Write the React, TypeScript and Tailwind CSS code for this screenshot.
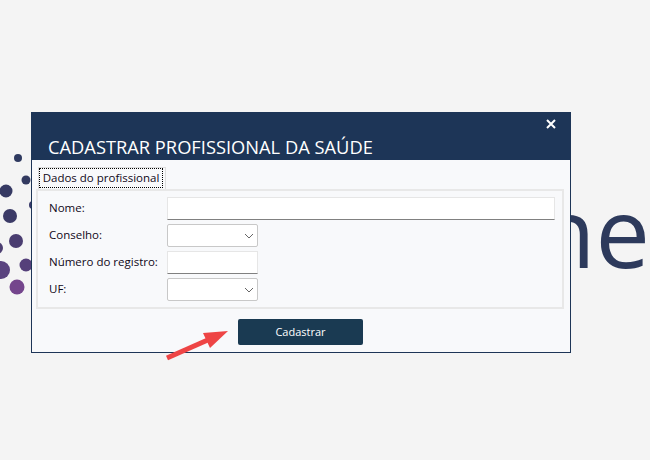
import React from "react";

const dots: [number, number, number, string][] = [
  [18, 158, 4, "#2f3a60"],
  [26, 180, 4.5, "#333a60"],
  [6, 191, 6.5, "#363a63"],
  [33, 205, 4, "#38396a"],
  [10, 216, 7, "#3b3a66"],
  [16, 241, 7, "#4a3d70"],
  [-3, 248, 6, "#4d3f72"],
  [26, 265, 6.5, "#55407a"],
  [1, 270, 9, "#5a437f"],
  [17, 287, 7.5, "#74458c"],
];

function Chevron() {
  return (
    <svg width="10" height="6" viewBox="0 0 10 6" className="mr-[1px]" fill="none">
      <path d="M1 1l4 4 4-4" stroke="#666" strokeWidth="1" />
    </svg>
  );
}

function Select() {
  return (
    <div className="w-[91px] h-[23px] bg-white border border-[#c8c8c8] rounded-[2px] flex items-center justify-end pr-[2px]">
      <Chevron />
    </div>
  );
}

function Label({ children }: { children: React.ReactNode }) {
  return <div className="w-[119px] pb-[2px] text-[11.5px] leading-[16px] text-[#100818] pl-[1px] whitespace-nowrap">{children}</div>;
}

export default function App() {
  return (
    <div
      className="relative w-[650px] h-[460px] overflow-hidden bg-[#f4f4f4] pl-[31px] pt-[112px]"
      style={{ fontFamily: '"Open Sans", "Noto Sans", sans-serif' }}
    >
      <svg className="absolute left-0 top-0" width="60" height="320" viewBox="0 0 60 320">
        {dots.map(([cx, cy, r, c], i) => (
          <circle key={i} cx={cx} cy={cy} r={r} fill={c} />
        ))}
      </svg>
      <div className="absolute left-[536px] top-[170px] text-[97px] font-medium leading-[120px] text-[#2d3a5c]">ne</div>

      <div className="relative w-[540px] h-[241px] flex flex-col border border-[#1d3557] border-t-0 bg-[#f8f9fb]">
        <div className="relative h-[48px] -mx-[1px] bg-[#1d3557] flex items-end pl-[17px] pb-[1px]">
          <span className="text-[18.3px] leading-[25px] text-white whitespace-nowrap">CADASTRAR PROFISSIONAL DA SAÚDE</span>
          <svg className="absolute right-[15px] top-[7px]" width="10" height="10" viewBox="0 0 10 10" fill="none">
            <path d="M1 1l8 8M9 1l-8 8" stroke="#fff" strokeWidth="2" />
          </svg>
        </div>

        <div className="flex flex-col px-[4px] pt-[7px]">
          <div className="h-[22px] flex">
            <div className="ml-[2px] w-[128px] h-[22px] border border-[#ddd] border-b-0 bg-[#f8f9fb] pr-[2px] relative z-10">
              <div className="h-[20px] border border-dotted border-black flex items-center justify-center text-[11.5px] text-[#100818] whitespace-nowrap">
                Dados do profissional
              </div>
            </div>
          </div>
          <div className="h-[120px] w-[528px] border-2 border-[#e8e8e8] pt-[6px] pl-[10px] flex flex-col gap-[4px]">
            <div className="flex items-center h-[23px]">
              <Label>Nome:</Label>
              <div className="w-[388px] h-[23px] bg-white border border-[#e6e6e6] border-b-[#808080]" />
            </div>
            <div className="flex items-center h-[23px]">
              <Label>Conselho:</Label>
              <Select />
            </div>
            <div className="flex items-center h-[23px]">
              <Label>Número do registro:</Label>
              <div className="w-[91px] h-[23px] bg-white border border-[#e6e6e6] border-b-[#808080]" />
            </div>
            <div className="flex items-center h-[23px]">
              <Label>UF:</Label>
              <Select />
            </div>
          </div>
        </div>

        <div className="flex justify-center pt-[10px] pr-[1px]">
          <div className="w-[125px] h-[26px] bg-[#1a3a52] rounded-[2px] flex items-center justify-center text-[11px] text-white">
            Cadastrar
          </div>
        </div>
      </div>

      <svg className="absolute left-[160px] top-[325px]" width="75" height="40" viewBox="0 0 75 40" fill="none">
        <path d="M7 33L50 14" stroke="#ee4545" strokeWidth="5" />
        <path d="M68 6L43 8L50 23Z" fill="#ee4545" />
      </svg>
    </div>
  );
}
